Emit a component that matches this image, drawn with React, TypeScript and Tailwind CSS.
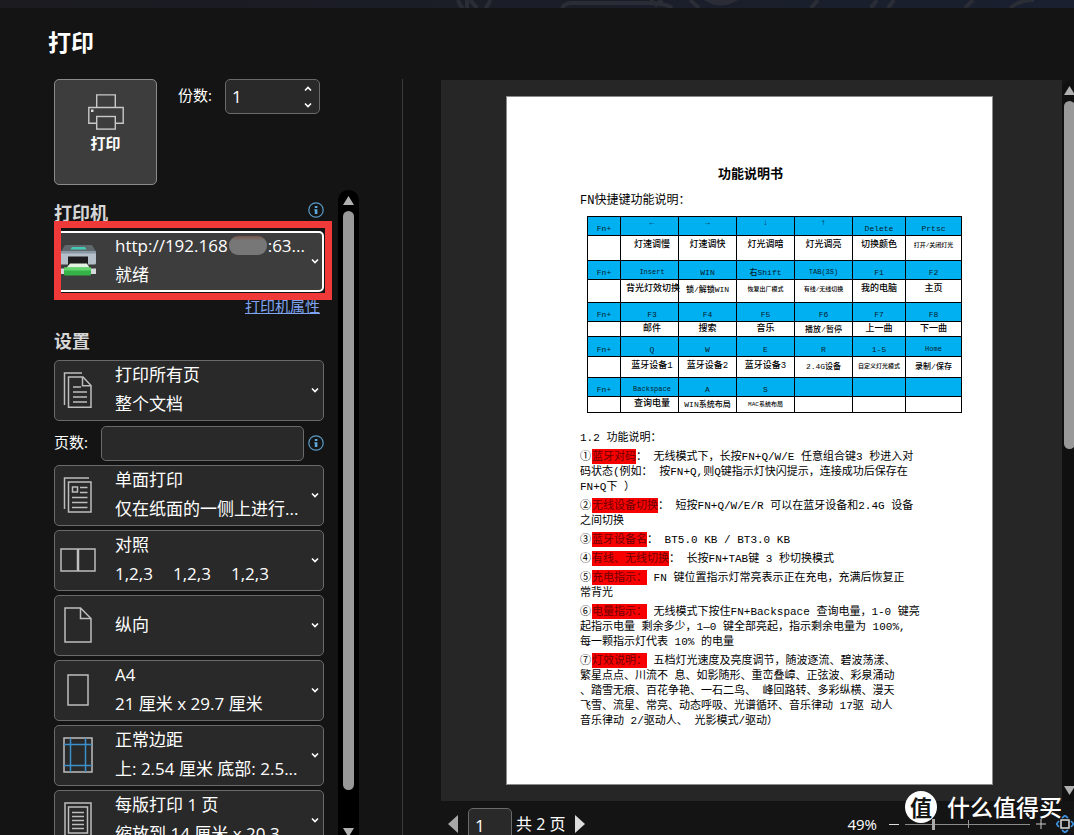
import type { ReactNode } from "react";

const uiFont = "font-['Open_Sans','Noto_Sans_CJK_SC',sans-serif]";
const docFont = "font-['Liberation_Mono','Noto_Sans_CJK_SC',monospace]";

function Chevron({ up = false }: { up?: boolean }) {
  return (
    <svg width="8" height="6" viewBox="0 0 8 6" className="shrink-0" aria-hidden="true">
      <path d={up ? "M1 4.5 4 1.5 7 4.5" : "M1 1.5 4 4.5 7 1.5"} fill="none" stroke="#fff" strokeWidth="1.6" />
    </svg>
  );
}

function Info({ label }: { label: string }) {
  return (
    <button type="button" aria-label={label} className="shrink-0">
      <svg width="16" height="16" viewBox="0 0 16 16" className="block">
        <circle cx="8" cy="8" r="7.2" fill="none" stroke="#5a9bc8" strokeWidth="1.2" />
        <rect x="6.8" y="4" width="2.6" height="2" fill="#5fa9dc" />
        <path d="M6.2 7.2h3.2v4.8H6.8V8.2h-.6z" fill="#5fa9dc" />
      </svg>
    </button>
  );
}

function PrinterOutline() {
  return (
    <svg width="36" height="36" viewBox="0 0 36 36" fill="none" stroke="#c8c8c8" strokeWidth="1.4" aria-hidden="true">
      <path d="M8.7 13.5V.9h18.6v12.6" />
      <path d="M8.5 29.3H.8V13.5h34.4v15.8h-7.7" />
      <rect x="8.7" y="22.5" width="18.6" height="12.6" />
      <rect x="3" y="15.5" width="2.5" height="2.5" fill="#ddd" stroke="none" />
    </svg>
  );
}

function PrinterColour() {
  return (
    <svg width="36" height="32" viewBox="0 0 36 32" aria-hidden="true">
      <path d="M3 1.500q.5-1.500 2-1.500h25q1.500 0 2 1.500L35 7H0z" fill="#5f686d" />
      <path d="M11 2h13l1.500 2.500H9.500z" fill="#45c9b4" />
      <path d="M0 6h35v12q0 1.500-1.500 1.500H0z" fill="#b4bfca" />
      <path d="M0 6h35v2.500H0z" fill="#8997a3" />
      <path d="M7 11.500h20V20H7z" fill="#1d1d1f" />
      <path d="M9 18.500h17l3 5H5z" fill="#e2f3df" />
      <rect y="23.500" width="35" height="5.500" fill="#d5d9dc" />
      <path d="M3 22.500h27V29q0 1.500-1 1.500H4q-1 0-1-1.500z" fill="#35b348" />
      <path d="M3 22.500h27v3H3z" fill="#63d76e" />
    </svg>
  );
}

const stroke = { fill: "none", stroke: "#bdbdbd", strokeWidth: 1.5 };

const icons: Record<string, ReactNode> = {
  pages: (
    <svg width="30" height="36" viewBox="0 0 30 36" {...stroke}>
      <path d="M1.500 33V1H19" />
      <path d="M5.500 5H20l8 8.500v21.700H5.500z" />
      <path d="M19.500 5v8.700H28" />
      <path d="M10 15h8M10 20h14M10 25h14M10 30h14" />
    </svg>
  ),
  single: (
    <svg width="30" height="36" viewBox="0 0 30 36" {...stroke}>
      <path d="M1.500 32V1H26" />
      <rect x="5.500" y="5" width="22.500" height="30" />
      <rect x="9.500" y="10" width="5" height="5" />
      <path d="M17 10.500h7.500M17 15.500h7.500M9 20.500h15.500M9 25.500h15.500M9 30.500h15.500" />
    </svg>
  ),
  collate: (
    <svg width="36" height="24" viewBox="0 0 36 24" {...stroke}>
      <rect x="1" y="1" width="34" height="22" />
      <path d="M18 1v22" strokeWidth="2.500" />
    </svg>
  ),
  portrait: (
    <svg width="28" height="36" viewBox="0 0 28 36" {...stroke}>
      <path d="M1 1h15.500L27 11.500V35H1z" />
      <path d="M16.500 1v10.500H27" />
    </svg>
  ),
  paper: (
    <svg width="22" height="32" viewBox="0 0 22 32" {...stroke}>
      <rect x="1" y="1" width="20" height="30" />
    </svg>
  ),
  margins: (
    <svg width="30" height="36" viewBox="0 0 30 36" {...stroke}>
      <rect x="1" y="1" width="28" height="34" />
      <path d="M7.500 1v34M22.500 1v34M1 7.500h28M1 28.500h28" stroke="#3c8fc8" />
    </svg>
  ),
  sheet: (
    <svg width="28" height="36" viewBox="0 0 28 36" {...stroke}>
      <rect x="1" y="1" width="26" height="34" />
      <rect x="4.500" y="5" width="19" height="26" />
      <path d="M8 10.500h12M8 14.500h12M8 18.500h12M8 22.500h12M8 26.500h12" strokeWidth="1.300" />
    </svg>
  ),
};

function Option({ icon, title, detail }: { icon: string; title: string; detail?: ReactNode }) {
  return (
    <button
      type="button"
      aria-haspopup="listbox"
      className="flex h-[61px] w-full shrink-0 items-center rounded-[5px] border border-[#6a6a6a] bg-[#292929] pr-1 pb-0.5 text-left text-[17px] leading-[29px] text-white"
    >
      <span className="flex w-[46px] shrink-0 justify-center" aria-hidden="true">{icons[icon]}</span>
      <span className="ml-3.5 min-w-0 flex-1 pb-px">
        <span className="block whitespace-pre">{title}</span>
        {detail && <span className="block whitespace-pre">{detail}</span>}
      </span>
      <Chevron />
    </button>
  );
}

type Cell = [text: string, size?: "s" | "m"];
const table: { h: string; head: boolean; cells: Cell[] }[] = [
  { h: "h-[19px]", head: true, cells: [["Fn+"], ["←", "s"], ["→", "s"], ["↓", "s"], ["↑", "s"], ["Delete"], ["Prtsc"]] },
  { h: "h-[25px]", head: false, cells: [[""], ["灯速调慢"], ["灯速调快"], ["灯光调暗"], ["灯光调亮"], ["切换颜色"], ["打开/关闭灯光", "s"]] },
  { h: "h-[19px]", head: true, cells: [["Fn+"], ["Insert", "m"], ["WIN"], ["右Shift"], ["TAB(3S)", "m"], ["F1"], ["F2"]] },
  { h: "h-[23px]", head: false, cells: [[""], ["背光灯效切换"], ["锁/解锁WIN", "m"], ["恢复出厂模式", "s"], ["有线/无线切换", "s"], ["我的电脑"], ["主页"]] },
  { h: "h-[19px]", head: true, cells: [["Fn+"], ["F3"], ["F4"], ["F5"], ["F6"], ["F7"], ["F8"]] },
  { h: "h-[15px]", head: false, cells: [[""], ["邮件"], ["搜索"], ["音乐"], ["播放/暂停", "m"], ["上一曲"], ["下一曲"]] },
  { h: "h-[20px]", head: true, cells: [["Fn+"], ["Q"], ["W"], ["E"], ["R"], ["1-5"], ["Home", "m"]] },
  { h: "h-[21px]", head: false, cells: [[""], ["蓝牙设备1"], ["蓝牙设备2"], ["蓝牙设备3"], ["2.4G设备", "m"], ["自定义灯光模式", "s"], ["录制/保存", "m"]] },
  { h: "h-[19px]", head: true, cells: [["Fn+"], ["Backspace", "m"], ["A"], ["S"], [""], [""], [""]] },
  { h: "h-[16px]", head: false, cells: [[""], ["查询电量"], ["WIN系统布局", "m"], ["MAC系统布局", "s"], [""], [""], [""]] },
];

function cellSize(head: boolean, size?: "s" | "m") {
  if (head) return size === "m" ? "text-[7px]" : "text-[8px]";
  if (size === "s") return "text-[6px]";
  return size === "m" ? "text-[8px]" : "text-[9px]";
}

function cellOffset(row: { h: string; head: boolean }, size?: "s" | "m") {
  if (row.head) return size === "s" ? "h-[17px] leading-[10px]" : "";
  return row.h === "h-[15px]" || row.h === "h-[16px]" ? "pt-px" : "pt-[3px]";
}

function KeyTable() {
  return (
    <table className="ml-[7px] w-[375px] table-fixed border-collapse">
      <colgroup>
        <col className="w-[33px]" />
        <col className="w-[58px]" />
        <col className="w-[58px]" />
        <col className="w-[58px]" />
        <col className="w-[58px]" />
        <col className="w-[53px]" />
        <col className="w-[56px]" />
      </colgroup>
      <tbody>
        {table.map((row, r) => (
          <tr key={r} className={`${row.h} ${row.head ? "bg-[#00b0f0] text-[#00202e]" : "bg-white text-black"}`}>
            {row.cells.map(([text, size], c) => (
              <td
                key={c}
                className={`border border-black px-0 text-center leading-[13px] font-medium whitespace-nowrap ${row.head ? "align-bottom" : "align-top"} ${c === 1 ? "pl-[5px]" : ""} ${cellSize(row.head, size)}`}
              >
                <span className={`block ${cellOffset(row, size)}`}>{text}</span>
              </td>
            ))}
          </tr>
        ))}
      </tbody>
    </table>
  );
}

const notes: { no: string; mark: string; lines: string[] }[] = [
  { no: "①", mark: "蓝牙对码", lines: ["： 无线模式下，长按FN+Q/W/E 任意组合键3 秒进入对", "码状态(例如： 按FN+Q,则Q键指示灯快闪提示，连接成功后保存在", "FN+Q下 ）"] },
  { no: "②", mark: "无线设备切换", lines: ["： 短按FN+Q/W/E/R 可以在蓝牙设备和2.4G 设备", "之间切换"] },
  { no: "③", mark: "蓝牙设备名", lines: ["： BT5.0 KB / BT3.0 KB"] },
  { no: "④", mark: "有线、无线切换", lines: ["： 长按FN+TAB键 3 秒切换模式"] },
  { no: "⑤", mark: "充电指示：", lines: [" FN 键位置指示灯常亮表示正在充电，充满后恢复正", "常背光"] },
  { no: "⑥", mark: "电量指示：", lines: [" 无线模式下按住FN+Backspace 查询电量，1-0 键亮", "起指示电量 剩余多少，1—0 键全部亮起，指示剩余电量为 100%,", "每一颗指示灯代表 10% 的电量"] },
  { no: "⑦", mark: "灯效说明：", lines: [" 五档灯光速度及亮度调节，随波逐流、碧波荡漾、", "繁星点点、川流不 息、如影随形、重峦叠嶂、正弦波、彩泉涌动", "、踏雪无痕、百花争艳、一石二鸟、 峰回路转、多彩纵横、漫天", "飞雪、流星、常亮、动态呼吸、光谱循环、音乐律动 17驱 动人", "音乐律动 2/驱动人、 光影模式/驱动）"] },
];

function DocumentPage() {
  return (
    <article className={`h-[689px] w-[487px] shrink-0 border border-[#8a8a8a] bg-white pt-[70px] pl-[73px] text-black ${docFont}`}>
      <h2 className="mr-[71px] text-center text-[13px] leading-4 font-bold">功能说明书</h2>
      <p className="mt-2.5 text-[12px] leading-4">FN快捷键功能说明：</p>
      <div className="mt-[7px]">
        <KeyTable />
      </div>
      <div className="mt-[18px] flex flex-col gap-1 text-[11px] leading-[15px] whitespace-pre">
        <p>1.2 功能说明：</p>
        {notes.map((n) => (
          <p key={n.no}>
            {n.no}
            <mark className="ml-px bg-[#f80000] pt-0.5 pb-px text-[#700000]">{n.mark}</mark>
            {n.lines.join("\n")}
          </p>
        ))}
      </div>
    </article>
  );
}

export default function App() {
  return (
    <div className={`relative flex h-screen flex-col overflow-hidden bg-[#141414] text-white ${uiFont}`}>
      <div className="flex h-2 shrink-0 justify-end bg-linear-to-r from-[#1b1b20] to-[#1a2030]" aria-hidden="true">
        <svg width="624" height="8" viewBox="0 0 624 8" fill="none" stroke="#2b2d36" strokeWidth="4">
          <path d="M8 0q1 5 5 8M40 0q-1 5-5 8M17 0v8M20 0l7 8" />
          <path d="M112 8q3-5 10-5h74q20 0 26 5M200 0l6 5 6-5" />
          <path d="M240 0l9 8" />
          <path d="M254 0q17 11 34 0z" fill="#2b2d36" stroke="none" />
          <path d="M368 0l-7 8M427 0l-6 8M444 0l-6 8" />
          <path d="M515 8l8-8M560 8q10-8 24-8" />
        </svg>
      </div>
      <h1 className="h-[71px] shrink-0 pt-[17px] pl-12 text-[23px] leading-[34px] font-bold">打印</h1>

      <div className="flex min-h-0 flex-1">
        <aside className="flex w-[403px] shrink-0 flex-col border-r border-[#3c3c3c] pl-[54px]">
          <div className="flex h-[111px] shrink-0 items-start">
            <button type="button" className="flex h-[106px] w-[103px] flex-col items-center rounded-[5px] border border-[#8a8a8a] bg-[#3d3d3d] pt-3.5">
              <PrinterOutline />
              <span className="mt-px text-[15px] leading-6 font-bold">打印</span>
            </button>
            <label htmlFor="copies" className="ml-[21px] w-[47px] text-[15px] leading-8">份数:</label>
            <div className="flex h-[35px] w-[95px] items-center rounded-[5px] border border-[#6a6a6a] bg-[#292929] pr-[7px]">
              <input id="copies" type="text" defaultValue="1" className="w-full min-w-0 bg-transparent pl-1.5 text-[17px] outline-none" />
              <div className="flex flex-col gap-2">
                <button type="button" aria-label="增加" className="flex h-2 items-center"><Chevron up /></button>
                <button type="button" aria-label="减少" className="flex h-2 items-center"><Chevron /></button>
              </div>
            </div>
          </div>

          <div className="flex min-h-0 flex-1">
            <div className="flex w-[270px] flex-col overflow-visible">
              <div className="flex h-[41px] shrink-0 items-center justify-between pb-0.5">
                <h2 className="pt-1.5 text-[18px] leading-6 font-bold text-[#d6d6d6]">打印机</h2>
                <Info label="打印机信息" />
              </div>
              <div className="relative h-[61px] shrink-0">
                <button type="button" aria-haspopup="listbox" className="flex h-full w-full items-center rounded-[5px] border-2 border-white bg-[#3d3d3d] pr-[3px] pb-0.5 pl-[5px] text-left text-[17px] leading-[29px]">
                  <PrinterColour />
                  <span className="ml-[18px] min-w-0 flex-1 pb-px">
                    <span className="flex items-center whitespace-pre">
                      http://192.168
                      <span className="mx-px h-[19px] w-[38px] shrink-0 rounded-[9px] bg-linear-to-b from-[#76564e] to-[#777] to-25%" />
                      :63...
                    </span>
                    <span className="block">就绪</span>
                  </span>
                  <Chevron />
                </button>
                <span className="pointer-events-none absolute -top-2.5 -right-2 -bottom-2 left-0 border-7 border-[#f03a3a]" />
              </div>
              <a href="#printer" className="mt-[3px] mr-1 self-end text-[15px] leading-[22px] text-[#7fa3ee] underline">打印机属性</a>
              <h2 className="mt-3 mb-[7px] shrink-0 text-[18px] leading-6 font-bold text-[#d6d6d6]">设置</h2>
              <div className="flex flex-col gap-1">
                <Option icon="pages" title="打印所有页" detail="整个文档" />
                <div className="flex h-9 shrink-0 items-center">
                  <label htmlFor="pages" className="w-[47px] pb-0.5 text-[15px]">页数:</label>
                  <input id="pages" type="text" className="h-[35px] w-[203px] rounded-[5px] border border-[#6a6a6a] bg-[#292929] px-2 outline-none" />
                  <span className="ml-1 flex"><Info label="页数信息" /></span>
                </div>
                <Option icon="single" title="单面打印" detail="仅在纸面的一侧上进行..." />
                <Option
                  icon="collate"
                  title="对照"
                  detail={
                    <span className="flex gap-5">
                      <span>1,2,3</span>
                      <span>1,2,3</span>
                      <span>1,2,3</span>
                    </span>
                  }
                />
                <Option icon="portrait" title="纵向" />
                <Option icon="paper" title="A4" detail="21 厘米 x 29.7 厘米" />
                <Option icon="margins" title="正常边距" detail="上: 2.54 厘米 底部: 2.5..." />
                <Option icon="sheet" title="每版打印 1 页" detail="缩放到 14 厘米 x 20.3..." />
              </div>
            </div>
            <div className="ml-3.5 flex w-[21px] flex-col items-center rounded-t-[10px] bg-black pt-1.5" aria-hidden="true">
              <svg width="11" height="9" viewBox="0 0 11 9"><path d="M5.500 0 11 9H0z" fill="#b0b0b0" /></svg>
              <span className="mt-1.5 w-[11px] flex-1 rounded-full bg-[#999]" />
              <svg width="11" height="9" viewBox="0 0 11 9" className="mt-[38px] -mb-0.5"><path d="M5.500 9 11 0H0z" fill="#b0b0b0" /></svg>
            </div>
          </div>
        </aside>

        <main className="ml-[38px] flex min-w-0 flex-1 flex-col pt-px">
          <div className="flex min-h-0 flex-1">
            <div className="flex min-w-0 flex-1 items-start justify-center bg-[#262626] pt-4 pr-1">
              <DocumentPage />
            </div>
            <div className="flex w-3 flex-col items-end overflow-hidden rounded-tl-[10px] bg-[#101010] pt-1.5" aria-hidden="true">
              <svg width="10" height="9" viewBox="0 0 10 9" className="shrink-0"><path d="M5.500 0 11 9H0z" fill="#b0b0b0" /></svg>
              <span className="mt-1.5 -mr-px h-[348px] w-[11px] shrink-0 rounded-full bg-[#999]" />
              <span className="flex-1" />
              <svg width="10" height="9" viewBox="0 0 10 9" className="mb-1.5 shrink-0"><path d="M5.500 9 11 0H0z" fill="#b0b0b0" /></svg>
            </div>
          </div>

          <footer className="flex h-[34px] shrink-0 items-start overflow-hidden">
            <button type="button" aria-label="上一页" className="mt-3.5 ml-[7px]">
              <svg width="10" height="18" viewBox="0 0 10 18" className="block"><path d="M10 0v18L0 9z" fill="#a8a8a8" /></svg>
            </button>
            <input aria-label="当前页" type="text" defaultValue="1" className="mt-[7px] ml-2.5 h-[35px] w-11 rounded-[5px] border border-[#6a6a6a] bg-[#292929] pl-1.5 text-[17px] outline-none" />
            <span className="mt-[11px] ml-1 text-[16px] leading-6 whitespace-nowrap">共 2 页</span>
            <button type="button" aria-label="下一页" className="mt-3.5 ml-2.5">
              <svg width="10" height="18" viewBox="0 0 10 18" className="block"><path d="M0 0v18l10-9z" fill="#ddd" /></svg>
            </button>
            <div className="mt-[11px] ml-auto flex h-6 items-center">
              <span className="mr-3 text-[15px]">49%</span>
              <button type="button" aria-label="缩小" className="flex h-4 w-2.5 items-center"><span className="h-px w-full bg-[#ddd]" /></button>
              <span className="relative ml-1.5 flex h-4 w-[125px] items-center">
                <span className="absolute top-1 left-1/2 h-2 w-px bg-[#999]" />
                <input
                  aria-label="缩放"
                  type="range"
                  min="0"
                  max="100"
                  defaultValue="22"
                  className="h-px w-full appearance-none bg-[#8a8a8a] [&::-webkit-slider-thumb]:h-[11px] [&::-webkit-slider-thumb]:w-[3px] [&::-webkit-slider-thumb]:appearance-none [&::-webkit-slider-thumb]:bg-[#aaa]"
                />
              </span>
              <button type="button" aria-label="放大" className="ml-1.5">
                <svg width="10" height="10" viewBox="0 0 10 10" className="block"><path d="M5 0v10M0 5h10" stroke="#ccc" strokeWidth="1" /></svg>
              </button>
              <button type="button" aria-label="缩放到页面" className="ml-2.5">
                <svg width="18" height="18" viewBox="0 0 18 18" className="block" fill="none">
                  <rect x="5" y="5" width="8" height="8" stroke="#ddd" strokeWidth="1.500" />
                  <path d="M6 3l3-2.500L12 3M6 15l3 2.500 3-2.500M3 6 .5 9 3 12M15 6l2.500 3-2.500 3" stroke="#3c8fd8" strokeWidth="1.800" />
                </svg>
              </button>
            </div>
          </footer>
        </main>
      </div>

      <div className="pointer-events-none absolute right-3 bottom-3 flex items-center gap-2.5">
        <span className="flex size-8 items-center justify-center rounded-full bg-white text-[22px] leading-8 font-bold text-[#141414]">值</span>
        <span className="text-[23px] leading-8 font-medium">什么值得买</span>
      </div>
    </div>
  );
}
